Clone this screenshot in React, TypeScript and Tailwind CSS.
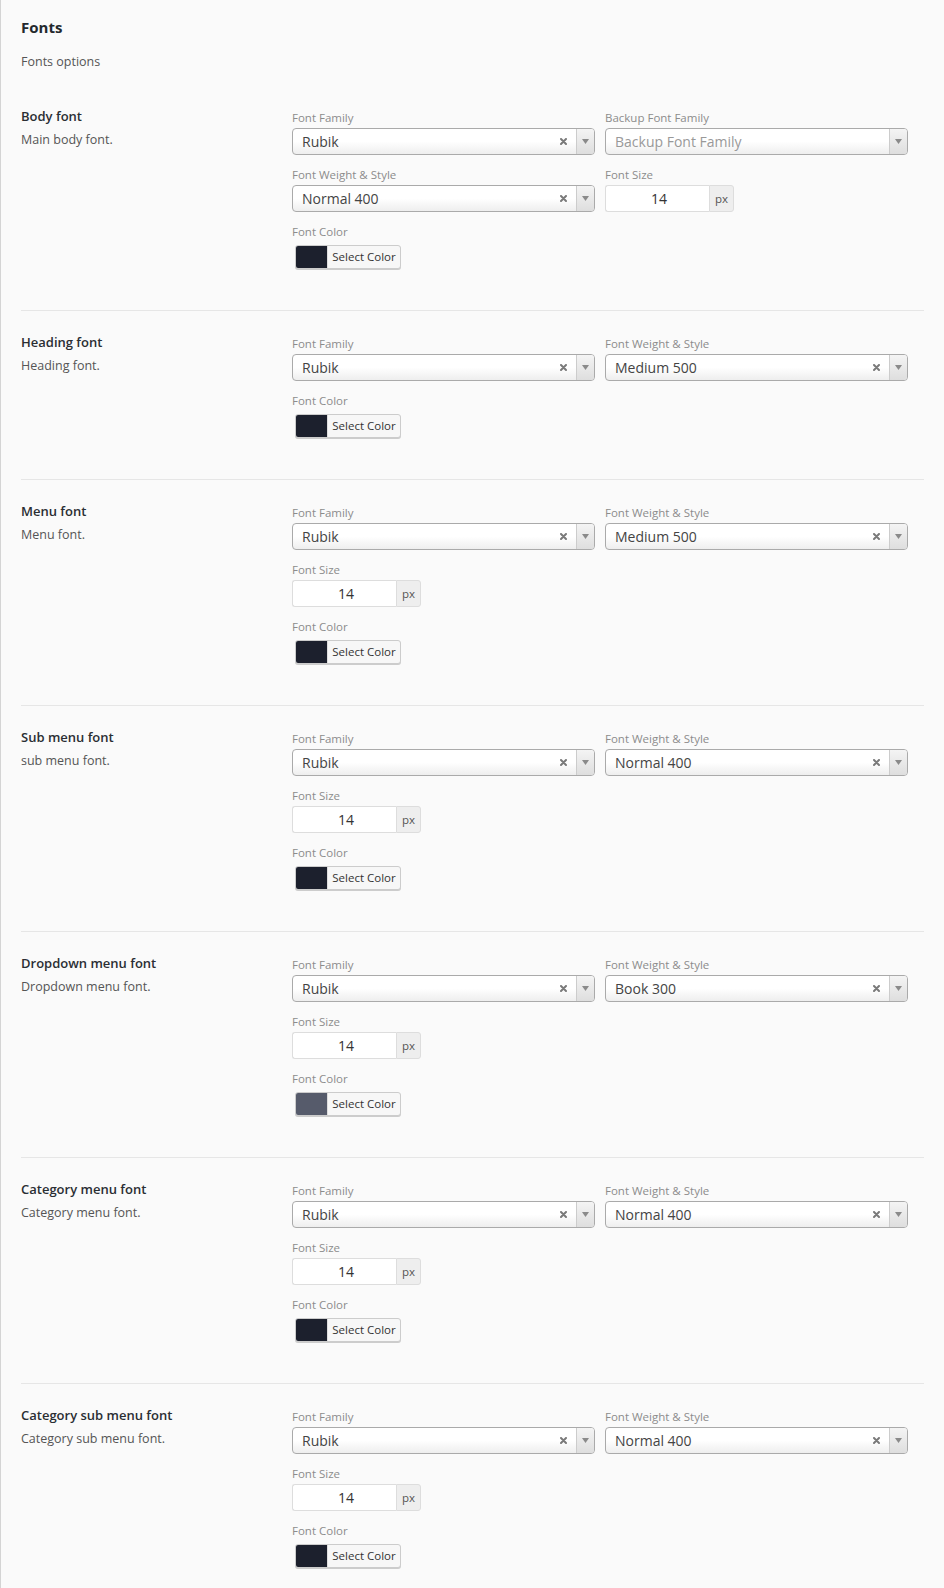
type Field =
  | { kind: 'select'; label: string; value: string; placeholder?: boolean; clear?: boolean }
  | { kind: 'size'; label: string; value: string }
  | { kind: 'color'; label: string; color: string };

interface Section {
  title: string;
  desc: string;
  rows: Field[][];
}

const family = (): Field => ({ kind: 'select', label: 'Font Family', value: 'Rubik', clear: true });
const weight = (v: string): Field => ({ kind: 'select', label: 'Font Weight & Style', value: v, clear: true });
const size = (): Field => ({ kind: 'size', label: 'Font Size', value: '14' });
const color = (c = '#1c202d'): Field => ({ kind: 'color', label: 'Font Color', color: c });

const sections: Section[] = [
  {
    title: 'Body font',
    desc: 'Main body font.',
    rows: [
      [family(), { kind: 'select', label: 'Backup Font Family', value: 'Backup Font Family', placeholder: true }],
      [weight('Normal 400'), size()],
      [color()],
    ],
  },
  { title: 'Heading font', desc: 'Heading font.', rows: [[family(), weight('Medium 500')], [color()]] },
  { title: 'Menu font', desc: 'Menu font.', rows: [[family(), weight('Medium 500')], [size()], [color()]] },
  { title: 'Sub menu font', desc: 'sub menu font.', rows: [[family(), weight('Normal 400')], [size()], [color()]] },
  {
    title: 'Dropdown menu font',
    desc: 'Dropdown menu font.',
    rows: [[family(), weight('Book 300')], [size()], [color('#565b6b')]],
  },
  {
    title: 'Category menu font',
    desc: 'Category menu font.',
    rows: [[family(), weight('Normal 400')], [size()], [color()]],
  },
  {
    title: 'Category sub menu font',
    desc: 'Category sub menu font.',
    rows: [[family(), weight('Normal 400')], [size()], [color()]],
  },
];

function Label({ text }: { text: string }) {
  return <div className="text-[11.5px] leading-[16px] text-[#8c8c8c] mb-[2px]">{text}</div>;
}

function SelectBox({ value, placeholder, clear }: { value: string; placeholder?: boolean; clear?: boolean }) {
  return (
    <div className="flex h-[27px] w-[303px] rounded-[4px] border border-[#aaaaaa] bg-gradient-to-b from-white from-50% to-[#eeeeee] overflow-hidden">
      <div
        className={`flex-1 pl-[9px] flex items-center text-[14px] ${placeholder ? 'text-[#999999]' : 'text-[#444444]'}`}
      >
        {value}
      </div>
      {clear && (
        <div className="w-[26px] flex items-center justify-center">
          <svg width="7" height="7" viewBox="0 0 7 7">
            <path d="M1 1 L6 6 M6 1 L1 6" stroke="#7a7a7a" strokeWidth="2" strokeLinecap="round" />
          </svg>
        </div>
      )}
      <div className="w-[18px] border-l border-[#cccccc] bg-gradient-to-b from-[#f4f4f4] to-[#dedede] flex items-center justify-center">
        <svg width="7" height="5" viewBox="0 0 7 5">
          <path d="M0 0 L7 0 L3.5 5 Z" fill="#8a8a8a" />
        </svg>
      </div>
    </div>
  );
}

function SizeBox({ value }: { value: string }) {
  return (
    <div className="flex h-[27px] w-[129px]">
      <div className="w-[104px] rounded-l-[3px] border border-r-0 border-[#dddddd] bg-white flex items-center justify-center pl-[3px] text-[14px] text-[#333333]">
        {value}
      </div>
      <div className="w-[25px] rounded-r-[3px] border border-[#dddddd] bg-[#eeeeee] flex items-center justify-center text-[11.5px] text-[#555555]">
        px
      </div>
    </div>
  );
}

function ColorButton({ c }: { c: string }) {
  return (
    <div className="ml-[3px] mt-[5px] flex h-[24px] w-[106px] rounded-[3px] border border-[#cccccc] bg-[#f7f7f7] shadow-[0_1px_0_#cccccc] overflow-hidden">
      <div className="w-[31px] h-full" style={{ backgroundColor: c }} />
      <div className="flex-1 flex items-center justify-center text-[11.5px] text-[#333333] border-l border-[#dddddd]">
        Select Color
      </div>
    </div>
  );
}

function FieldView({ f }: { f: Field }) {
  return (
    <div className="w-[303px]">
      <Label text={f.label} />
      {f.kind === 'select' && <SelectBox value={f.value} placeholder={f.placeholder} clear={f.clear} />}
      {f.kind === 'size' && <SizeBox value={f.value} />}
      {f.kind === 'color' && <ColorButton c={f.color} />}
    </div>
  );
}

export default function App() {
  return (
    <div
      className="min-h-[1588px] bg-[#fafafa] border-l border-[#d4d4d4] pl-[20px] pr-[20px]"
      style={{ fontFamily: '"Open Sans", "Noto Sans", sans-serif' }}
    >
      <h1 className="pt-[17px] text-[15px] leading-[20px] font-bold text-[#23282d]">Fonts</h1>
      <p className="mt-[16px] text-[12.5px] leading-[18px] text-[#555555]">Fonts options</p>

      <div className="mt-[39px]">
        {sections.map((s, i) => (
          <div
            key={s.title}
            className={`flex pb-[41px] ${i > 0 ? 'pt-[25px]' : ''} ${
              i < sections.length - 1 ? 'border-b border-[#e6e6e6]' : ''
            }`}
          >
            <div className="w-[271px] -mt-[3px]">
              <div className="text-[13px] leading-[18px] font-semibold text-[#2a2e33]">{s.title}</div>
              <div className="mt-[6px] text-[12.5px] leading-[18px] text-[#555555]">{s.desc}</div>
            </div>
            <div className="flex flex-col gap-[12px]">
              {s.rows.map((row, ri) => (
                <div key={ri} className="flex gap-[10px]">
                  {row.map((f, fi) => (
                    <FieldView key={fi} f={f} />
                  ))}
                </div>
              ))}
            </div>
          </div>
        ))}
      </div>
    </div>
  );
}
